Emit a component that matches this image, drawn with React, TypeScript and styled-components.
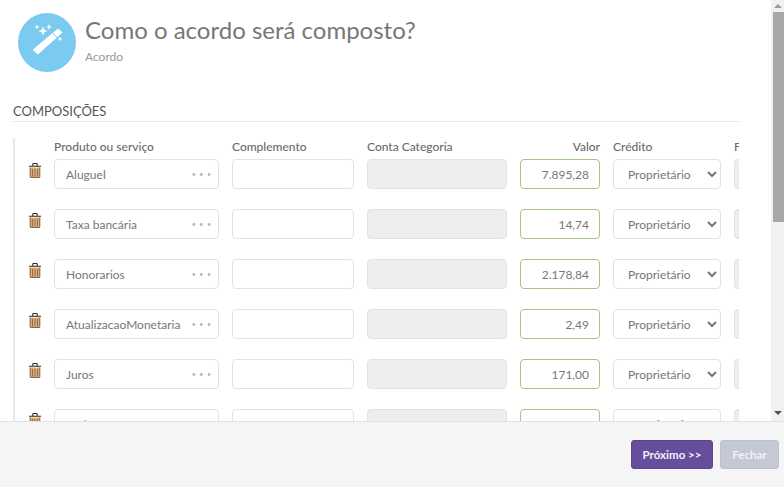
import { createGlobalStyle, styled } from "styled-components";

const GlobalStyle = createGlobalStyle`
  html, body {
    margin: 0;
    padding: 0;
    background: #fff;
    overflow: hidden;
  }
  * {
    box-sizing: border-box;
  }
  body, input, select, button {
    font-family: Lato, "Liberation Sans", sans-serif;
  }
`;

const Page = styled.div`
  width: 784px;
  height: 487px;
  display: flex;
  flex-direction: column;
`;

const Main = styled.div`
  height: 421px;
  display: flex;
  overflow: hidden;
`;

const Content = styled.div`
  flex: 1;
  min-width: 0;
  padding: 13px 32px 0 13px;
  overflow: hidden;
`;

const Header = styled.div`
  display: flex;
  align-items: flex-start;
  gap: 9px;
  padding-left: 5px;
  height: 59px;
`;

const IconCircle = styled.div`
  width: 58px;
  height: 59px;
  border-radius: 50%;
  background: #7bcbf1;
  display: flex;
  align-items: center;
  justify-content: center;
`;

const HeaderText = styled.div`
  display: flex;
  flex-direction: column;
  padding-top: 2px;
`;

const Title = styled.div`
  font-size: 24px;
  line-height: 30px;
  color: #777;
`;

const Subtitle = styled.div`
  font-size: 12px;
  line-height: 15px;
  margin-top: 4px;
  color: #999;
`;

const SectionTitle = styled.div`
  margin-top: 32px;
  height: 18px;
  font-size: 13px;
  line-height: 15px;
  color: #555;
  border-bottom: 1px solid #e6e6e6;
`;

const TableArea = styled.div`
  margin-top: 16px;
  border-left: 2px solid #e8e8e8;
  padding-left: 14px;
  overflow: hidden;
  display: flex;
  flex-direction: column;
  gap: 20px;
`;

const TableRow = styled.div`
  display: grid;
  grid-template-columns: 12px 165px 122px 140px 80px 108px 60px;
  column-gap: 13px;
  width: max-content;
`;

const HeaderRow = styled(TableRow)`
  height: 21px;
  margin-bottom: -20px;
`;

const ColumnLabel = styled.div<{ $right?: boolean }>`
  font-size: 12px;
  line-height: 18px;
  font-weight: 500;
  color: #6b6b6b;
  text-align: ${(p) => (p.$right ? "right" : "left")};
`;

const TrashButton = styled.div`
  height: 15px;
  margin-top: 4px;
  display: flex;
`;

const fieldBase = `
  width: 100%;
  height: 30px;
  border-radius: 4px;
  font-size: 12px;
  color: #777;
  outline: none;
  background: #fff;
`;

const ProductField = styled.div`
  ${fieldBase}
  border: 1px solid #e2e2e2;
  padding: 0 11px;
  display: flex;
  align-items: center;
  justify-content: space-between;
`;

const Dots = styled.span`
  letter-spacing: 3.5px;
  font-size: 7px;
  color: #b5b5b5;
  margin-right: -7.5px;
`;

const TextField = styled.input`
  ${fieldBase}
  border: 1px solid #e2e2e2;
  padding: 0 10px;
`;

const DisabledField = styled(TextField)`
  background: #eee;
`;

const ValueField = styled(TextField)`
  border-color: #a3c77f;
  text-align: right;
  padding: 0 10px;
`;

const SelectField = styled.select`
  ${fieldBase}
  border: 1px solid #e2e2e2;
  padding: 0 10px;
`;

const ScrollTrack = styled.div`
  width: 13px;
  padding-bottom: 2px;
  background: #f1f1f1;
  display: flex;
  flex-direction: column;
  align-items: flex-end;
`;

const ScrollArrow = styled.div<{ $down?: boolean }>`
  width: 100%;
  height: 12px;
  display: flex;
  align-items: center;
  justify-content: center;
  margin-top: ${(p) => (p.$down ? "auto" : "0")};
  &::before {
    content: "";
    border-left: 4px solid transparent;
    border-right: 4px solid transparent;
    border-${(p) => (p.$down ? "top" : "bottom")}: 4px solid ${(p) => (p.$down ? "#505050" : "#9a9a9a")};
  }
`;

const ScrollThumb = styled.div`
  width: 11px;
  height: 210px;
  background: #a8a8a8;
`;

const Footer = styled.div`
  flex: 1;
  background: #f5f5f5;
  border-top: 1px solid #e2e2e2;
  display: flex;
  justify-content: flex-end;
  gap: 7px;
  padding: 18px 5px 0 0;
`;

const FooterButton = styled.button<{ $muted?: boolean }>`
  height: 29px;
  padding: 0;
  width: ${(p) => (p.$muted ? "59px" : "82px")};
  border-radius: 3px;
  border: 1px solid ${(p) => (p.$muted ? "#bcc2d0" : "#5d4690")};
  background: ${(p) => (p.$muted ? "#c4c9d5" : "#664e9c")};
  color: ${(p) => (p.$muted ? "#f1f2f5" : "#f2eff8")};
  font-size: 11.5px;
  font-weight: 700;
`;

const WandIcon = () => (
  <svg width="34" height="34" viewBox="0 0 34 34" style={{ marginTop: -3 }}>
    <path fill="#fff" d="M28 4.500l4.500 4-24 21.400a1 1 0 0 1-1.300 0l-3.700-3.400a1 1 0 0 1 0-1.500z" />
    <path stroke="#7bcbf1" strokeWidth="1" fill="none" d="M22.600 9.200l5 4.600" />
    <path fill="#fff" d="M13 2.500l1.300 3.200L17.500 7l-3.200 1.300L13 11.500l-1.300-3.200L8.500 7l3.200-1.300zM19 0l.8 2.200L22 3l-2.200.8L19 6l-.8-2.200L16 3l2.200-.8zM7 .5l.7 1.800L9.500 3l-1.800.7L7 5.500l-.7-1.800L4.500 3l1.800-.7zM30 12.500l.7 1.800 1.800.7-1.800.7-.7 1.800-.7-1.800-1.800-.7 1.800-.7z" />
  </svg>
);

const TrashIcon = () => (
  <svg width="12" height="15" viewBox="0 0 12 15">
    <path fill="#eda95f" d="M1.200 4.500h9.600V14a1 1 0 0 1-1 1H2.200a1 1 0 0 1-1-1z" />
    <path stroke="#7d7468" strokeWidth="1" d="M3.500 6v7.500M6 6v7.500M8.500 6v7.500" />
    <path stroke="#2f2a26" strokeWidth="1.100" fill="none" d="M0 3.300h12M3.800 3V1.200a.7.7 0 0 1 .7-.7h3a.7.7 0 0 1 .7.7V3" />
    <path stroke="#6b6257" strokeWidth="1" fill="none" d="M1.200 4.500V14a.6.6 0 0 0 .6.6h8.400a.6.6 0 0 0 .6-.6V4.500" />
  </svg>
);

const rows = [
  { name: "Aluguel", value: "7.895,28" },
  { name: "Taxa bancária", value: "14,74" },
  { name: "Honorarios", value: "2.178,84" },
  { name: "AtualizacaoMonetaria", value: "2,49" },
  { name: "Juros", value: "171,00" },
  { name: "Multa", value: "789,53" },
];

const App: React.FC = () => {
  return (
    <Page>
      <GlobalStyle />
      <Main>
        <Content>
          <Header>
            <IconCircle>
              <WandIcon />
            </IconCircle>
            <HeaderText>
              <Title>Como o acordo será composto?</Title>
              <Subtitle>Acordo</Subtitle>
            </HeaderText>
          </Header>
          <SectionTitle>COMPOSIÇÕES</SectionTitle>
          <TableArea>
            <HeaderRow>
              <span />
              <ColumnLabel>Produto ou serviço</ColumnLabel>
              <ColumnLabel>Complemento</ColumnLabel>
              <ColumnLabel>Conta Categoria</ColumnLabel>
              <ColumnLabel $right>Valor</ColumnLabel>
              <ColumnLabel>Crédito</ColumnLabel>
              <ColumnLabel>Favorecido</ColumnLabel>
            </HeaderRow>
            {rows.map((row) => (
              <TableRow key={row.name}>
                <TrashButton>
                  <TrashIcon />
                </TrashButton>
                <ProductField>
                  {row.name}
                  <Dots>•••</Dots>
                </ProductField>
                <TextField />
                <DisabledField disabled />
                <ValueField defaultValue={row.value} />
                <SelectField defaultValue="Proprietário">
                  <option>Proprietário</option>
                  <option>Locatário</option>
                </SelectField>
                <DisabledField disabled />
              </TableRow>
            ))}
          </TableArea>
        </Content>
        <ScrollTrack>
          <ScrollArrow />
          <ScrollThumb />
          <ScrollArrow $down />
        </ScrollTrack>
      </Main>
      <Footer>
        <FooterButton>Próximo &gt;&gt;</FooterButton>
        <FooterButton $muted>Fechar</FooterButton>
      </Footer>
    </Page>
  );
};

export default App;
